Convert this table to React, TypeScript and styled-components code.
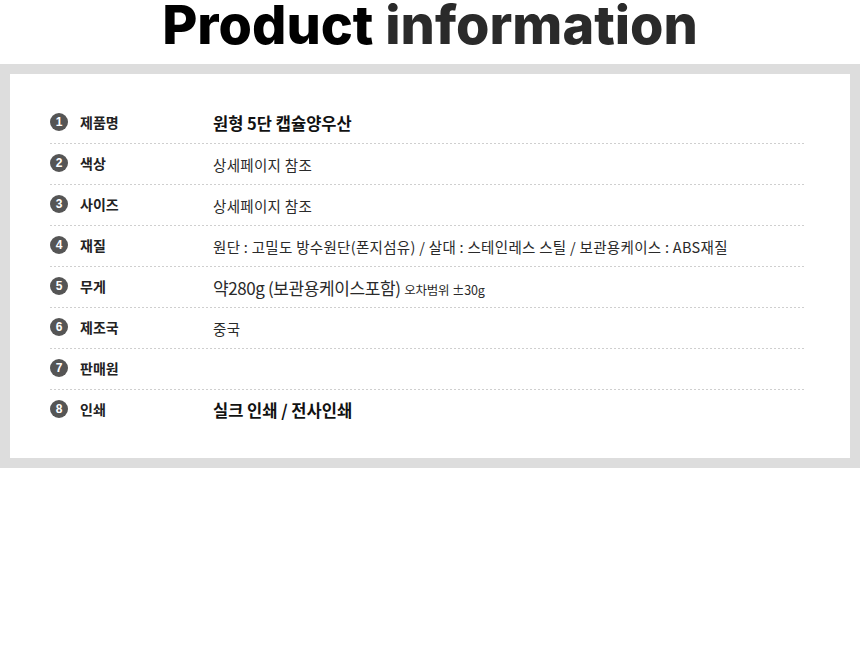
import React from 'react';
import styled, { createGlobalStyle } from 'styled-components';

const GlobalStyle = createGlobalStyle`
  html, body {
    margin: 0;
    padding: 0;
    background: #ffffff;
  }
  body {
    font-family: 'Noto Sans CJK KR', 'Noto Sans', sans-serif;
    color: #222;
  }
`;

const Page = styled.div`
  width: 860px;
`;

const Title = styled.h1`
  margin: 0;
  height: 64px;
  line-height: 49px;
  text-align: center;
  font-family: 'Inter', 'Liberation Sans', sans-serif;
  font-weight: 800;
  font-size: 54px;
  color: #2a2a2a;
`;

const Dark = styled.span`
  color: #000;
`;

const Frame = styled.div`
  background: #dddddd;
  padding: 10px;
`;

const Panel = styled.div`
  background: #fff;
  padding: 29px 46px 27px 40px;
`;

const InfoRow = styled.div<{ $last?: boolean }>`
  display: flex;
  align-items: center;
  height: 41px;
  box-sizing: border-box;
  padding-bottom: 1px;
  background: ${({ $last }) =>
    $last ? 'none' : 'linear-gradient(to right, #cfcfcf 50%, transparent 0) left bottom / 4px 1px repeat-x'};
`;

const Num = styled.span`
  width: 18px;
  height: 18px;
  border-radius: 50%;
  background: #555;
  color: #fff;
  font-family: 'Liberation Sans', sans-serif;
  font-weight: 700;
  font-size: 12px;
  display: flex;
  align-items: center;
  justify-content: center;
  flex-shrink: 0;
  margin-top: -2px;
`;

const Label = styled.span`
  width: 145px;
  padding-left: 12px;
  box-sizing: border-box;
  font-size: 14px;
  font-weight: 700;
  color: #222;
  margin-top: -2px;
`;

const Value = styled.span<{ $strong?: boolean }>`
  font-size: ${({ $strong }) => ($strong ? '16.5px' : '14.5px')};
  font-weight: ${({ $strong }) => ($strong ? 700 : 400)};
  color: ${({ $strong }) => ($strong ? '#111' : '#2a2a2a')};
  letter-spacing: ${({ $strong }) => ($strong ? '0' : '0.3px')};
  white-space: nowrap;
`;

const Big = styled.span`
  font-size: 17px;
  letter-spacing: -0.4px;
`;

const Small = styled.span`
  font-size: 12.5px;
  letter-spacing: -0.2px;
`;

interface Row {
  label: string;
  value?: React.ReactNode;
  strong?: boolean;
}

const rows: Row[] = [
  { label: '제품명', value: '원형 5단 캡슐양우산', strong: true },
  { label: '색상', value: '상세페이지 참조' },
  { label: '사이즈', value: '상세페이지 참조' },
  {
    label: '재질',
    value: '원단 : 고밀도 방수원단(폰지섬유) / 살대 : 스테인레스 스틸 / 보관용케이스 : ABS재질',
  },
  {
    label: '무게',
    value: (
      <>
        <Big>약280g (보관용케이스포함)</Big> <Small>오차범위 ±30g</Small>
      </>
    ),
  },
  { label: '제조국', value: '중국' },
  { label: '판매원' },
  { label: '인쇄', value: '실크 인쇄 / 전사인쇄', strong: true },
];

export default function App() {
  return (
    <>
      <GlobalStyle />
      <Page>
        <Title>
          <Dark>Product</Dark> information
        </Title>
        <Frame>
          <Panel>
            {rows.map((row, i) => (
              <InfoRow key={row.label} $last={i === rows.length - 1}>
                <Num>{i + 1}</Num>
                <Label>{row.label}</Label>
                <Value $strong={row.strong}>{row.value}</Value>
              </InfoRow>
            ))}
          </Panel>
        </Frame>
      </Page>
    </>
  );
}
